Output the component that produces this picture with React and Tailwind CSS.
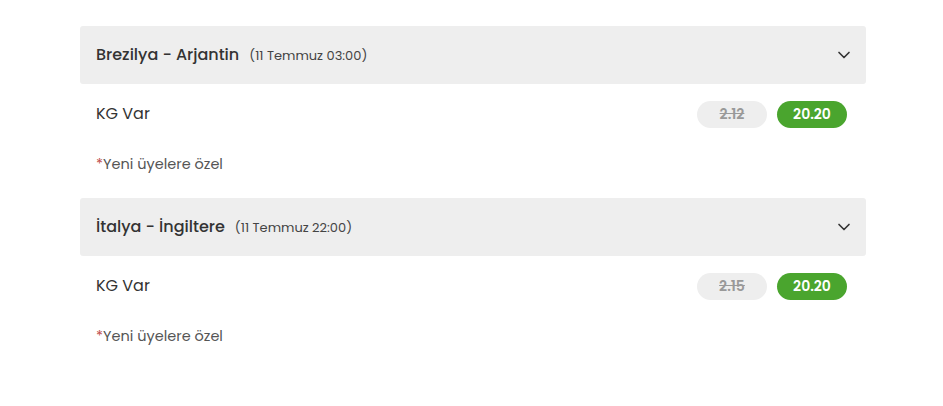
import { ChevronDown } from 'lucide-react';

const matches = [
  { teams: 'Brezilya - Arjantin', date: '(11 Temmuz 03:00)', market: 'KG Var', oldOdd: '2.12', newOdd: '20.20' },
  { teams: 'İtalya - İngiltere', date: '(11 Temmuz 22:00)', market: 'KG Var', oldOdd: '2.15', newOdd: '20.20' },
];

const MatchCard = ({ match }) => {
  return (
    <div>
      {/* Header */}
      <div className="flex h-[58px] items-center justify-between rounded-[3px] bg-[#eeeeee] pl-4 pr-3">
        <div className="flex items-baseline">
          <span className="text-[16px] font-medium text-[#333333]">{match.teams}</span>
          <span className="ml-[10px] text-[13px] text-[#444444]">{match.date}</span>
        </div>
        <ChevronDown className="h-[20px] w-[20px] text-[#333333]" strokeWidth={2} />
      </div>

      {/* Market row */}
      <div className="flex h-[60px] items-center justify-between pl-4 pr-[19px]">
        <span className="text-[16px] text-[#333333]">{match.market}</span>
        <div className="flex gap-[10px]">
          <span className="flex h-[27px] w-[70px] items-center justify-center rounded-full bg-[#eeeeee] text-[14px] font-semibold text-[#999999] line-through">
            {match.oldOdd}
          </span>
          <span className="flex h-[27px] w-[70px] items-center justify-center rounded-full bg-[#4aa52e] text-[14px] font-semibold text-white">
            {match.newOdd}
          </span>
        </div>
      </div>

      {/* Note */}
      <div className="pl-4 pb-[24px] pt-[10px] text-[14.5px] leading-5 text-[#555555]">
        <span className="text-[#c0504d]">*</span>Yeni üyelere özel
      </div>
    </div>
  );
};

const App = () => {
  return (
    <div className="min-h-[406px] bg-white font-['Poppins','Inter',sans-serif]">
      <div className="ml-[80px] w-[786px] pt-[26px]">
        {matches.map((m) => (
          <MatchCard key={m.teams} match={m} />
        ))}
      </div>
    </div>
  );
};

export default App;
